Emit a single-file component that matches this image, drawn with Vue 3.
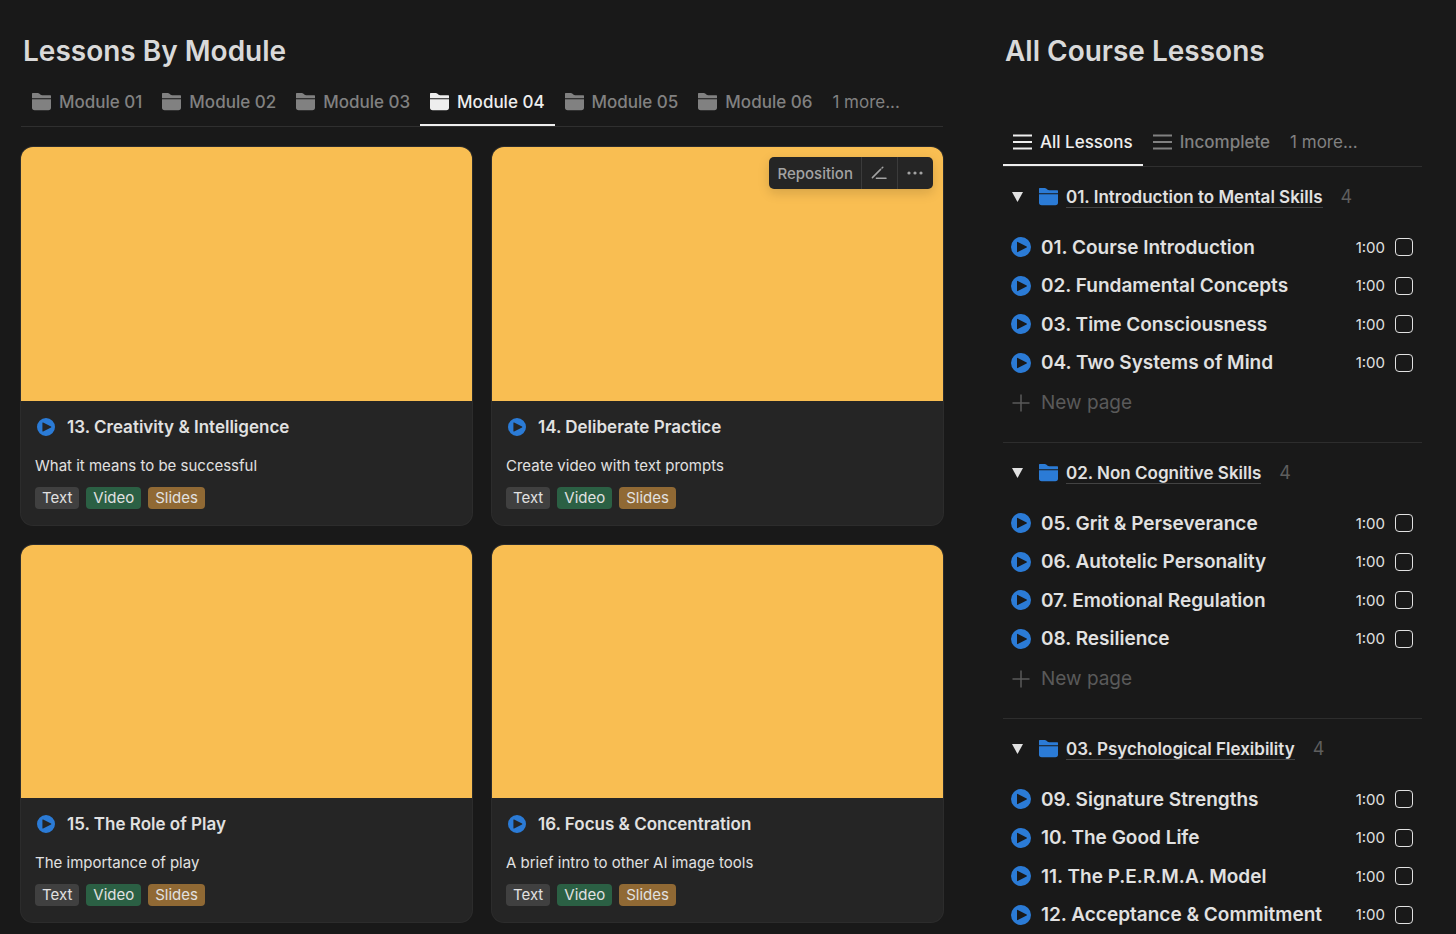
<script setup>
import { ref } from 'vue'

const modules = ['Module 01', 'Module 02', 'Module 03', 'Module 04', 'Module 05', 'Module 06']
const activeModule = ref('Module 04')

const cards = [
  { title: '13. Creativity & Intelligence', text: 'What it means to be successful' },
  { title: '14. Deliberate Practice', text: 'Create video with text prompts', tools: true },
  { title: '15. The Role of Play', text: 'The importance of play' },
  { title: '16. Focus & Concentration', text: 'A brief intro to other AI image tools' },
]
const tags = ['Text', 'Video', 'Slides']

const views = ['All Lessons', 'Incomplete']
const activeView = ref('All Lessons')

const groups = [
  {
    title: '01. Introduction to Mental Skills',
    more: true,
    lessons: ['01. Course Introduction', '02. Fundamental Concepts', '03. Time Consciousness', '04. Two Systems of Mind'],
  },
  {
    title: '02. Non Cognitive Skills',
    more: true,
    lessons: ['05. Grit & Perseverance', '06. Autotelic Personality', '07. Emotional Regulation', '08. Resilience'],
  },
  {
    title: '03. Psychological Flexibility',
    more: false,
    lessons: ['09. Signature Strengths', '10. The Good Life', '11. The P.E.R.M.A. Model', '12. Acceptance & Commitment'],
  },
]
</script>

<template>
  <main class="page">
    <section class="modules">
      <h2>Lessons By Module</h2>
      <nav class="tabs" aria-label="Modules">
        <button
          v-for="m in modules"
          :key="m"
          type="button"
          class="tab"
          :class="{ active: m === activeModule }"
          @click="activeModule = m"
        >
          <svg class="folder" viewBox="0 0 18 17" aria-hidden="true">
            <path d="M0 .6Q0 0 .6 0H5.6Q6.2 0 6.8.5L8.2 1.6Q8.8 2 9.6 2H17.4Q18 2 18 2.6V5H0Z" />
            <path d="M0 6H18V13.8Q18 16.4 15.4 16.4H2.6Q0 16.4 0 13.8Z" />
          </svg>
          <span>{{ m }}</span>
        </button>
        <button type="button" class="tab more">1 more...</button>
      </nav>

      <div class="gallery">
        <article v-for="c in cards" :key="c.title" class="card">
          <div class="cover">
            <div v-if="c.tools" class="tools">
              <button type="button">Reposition</button>
              <button type="button" class="square" aria-label="Edit">
                <svg viewBox="0 0 16 14" aria-hidden="true">
                  <path d="M1.4 11.6L9.6 3.4M11 2L11.8 1.2M5.4 12.3H15" fill="none" stroke="currentColor" stroke-width="1.5" stroke-linecap="round" />
                </svg>
              </button>
              <button type="button" class="square" aria-label="More">
                <svg viewBox="0 0 16 14" aria-hidden="true">
                  <circle cx="2" cy="7" r="1.6" /><circle cx="8" cy="7" r="1.6" /><circle cx="14" cy="7" r="1.6" />
                </svg>
              </button>
            </div>
          </div>
          <div class="body">
            <h3>
              <svg class="play" viewBox="0 0 20 20" aria-hidden="true">
                <path fill-rule="evenodd" d="M10 0A10 10 0 1 1 10 20A10 10 0 1 1 10 0ZM6 5.4V14.6Q6 15.4 6.8 15L15.6 10.5Q16.4 10 15.6 9.5L6.8 5Q6 4.6 6 5.4Z" />
              </svg>
              <span>{{ c.title }}</span>
            </h3>
            <p>{{ c.text }}</p>
            <div class="tags">
              <span v-for="t in tags" :key="t" class="tag" :class="t.toLowerCase()">{{ t }}</span>
            </div>
          </div>
        </article>
      </div>
    </section>

    <section class="course">
      <h2>All Course Lessons</h2>
      <nav class="tabs" aria-label="Lesson views">
        <button
          v-for="v in views"
          :key="v"
          type="button"
          class="tab"
          :class="{ active: v === activeView }"
          @click="activeView = v"
        >
          <svg class="lines" viewBox="0 0 19 16" aria-hidden="true">
            <path d="M0 1.5H19M0 8H19M0 14.5H19" stroke="currentColor" stroke-width="2" />
          </svg>
          <span>{{ v }}</span>
        </button>
        <button type="button" class="tab more">1 more...</button>
      </nav>

      <section v-for="g in groups" :key="g.title" class="group">
        <header>
          <button type="button" class="toggle" aria-label="Toggle group">
            <svg viewBox="0 0 11 10" aria-hidden="true"><path d="M0 0H11L5.5 10Z" /></svg>
          </button>
          <svg class="folder" viewBox="0 0 18 17" aria-hidden="true">
            <path d="M0 .6Q0 0 .6 0H5.6Q6.2 0 6.8.5L8.2 1.6Q8.8 2 9.6 2H17.4Q18 2 18 2.6V5H0Z" />
            <path d="M0 6H18V13.8Q18 16.4 15.4 16.4H2.6Q0 16.4 0 13.8Z" />
          </svg>
          <a href="#">{{ g.title }}</a>
          <span class="count">{{ g.lessons.length }}</span>
        </header>
        <ul>
          <li v-for="l in g.lessons" :key="l">
            <svg class="play" viewBox="0 0 20 20" aria-hidden="true">
              <path fill-rule="evenodd" d="M10 0A10 10 0 1 1 10 20A10 10 0 1 1 10 0ZM6 5.4V14.6Q6 15.4 6.8 15L15.6 10.5Q16.4 10 15.6 9.5L6.8 5Q6 4.6 6 5.4Z" />
            </svg>
            <a href="#">{{ l }}</a>
            <time>1:00</time>
            <input type="checkbox" :aria-label="l" />
          </li>
        </ul>
        <button v-if="g.more" type="button" class="new">
          <svg viewBox="0 0 20 20" aria-hidden="true">
            <path d="M10 1.5V18.5M1.5 10H18.5" stroke="currentColor" stroke-width="1.5" />
          </svg>
          <span>New page</span>
        </button>
      </section>
    </section>
  </main>
</template>

<style>
body {
  background: #191919;
}
</style>

<style scoped>
.page {
  display: grid;
  grid-template-columns: minmax(0, 11fr) minmax(0, 5fr);
  column-gap: 60px;
  padding: 31px 34px 0 21px;
  font-family: Inter, "Liberation Sans", sans-serif;
  color: #e1e1e1;
}
button {
  margin: 0;
  padding: 0;
  border: 0;
  background: none;
  color: inherit;
  font: inherit;
  cursor: pointer;
}
a {
  color: inherit;
  text-decoration: none;
}
svg {
  display: block;
  flex: none;
  fill: currentColor;
}
h2 {
  margin: 0;
  padding-left: 2px;
  font-size: 28px;
  line-height: 40px;
  font-weight: 600;
  color: #d9d9d9;
}

/* tab strips */
.tabs {
  display: flex;
  margin-top: 7px;
  border-bottom: 1px solid #2f2f2f;
  white-space: nowrap;
}
.modules .tabs {
  padding-left: 1px;
}
.course .tabs {
  margin-top: 47px;
}
.tab {
  display: flex;
  align-items: center;
  gap: 8px;
  padding: 0 10px;
  font-size: 17px;
  line-height: 48px;
  font-weight: 500;
  color: #818181;
}
.tab.active {
  color: #eeeeee;
  box-shadow: inset 0 -2px #eeeeee;
}
.tab.more {
  font-weight: 400;
}
.folder {
  width: 19px;
  height: 18px;
}
.lines {
  width: 19px;
  height: 16px;
}

/* gallery */
.gallery {
  display: grid;
  grid-template-columns: repeat(2, minmax(0, 1fr));
  gap: 20px;
  margin-top: 20px;
}
.card {
  overflow: hidden;
  border-radius: 12px;
  background: #252525;
  box-shadow: 0 0 0 1px #2c2c2c;
}
.cover {
  position: relative;
  aspect-ratio: 16 / 9;
  background: #f9be52;
}
.tools {
  position: absolute;
  top: 10px;
  right: 10px;
  display: flex;
  border-radius: 5px;
  background: #252525;
  box-shadow: 0 4px 12px rgba(15, 15, 15, 0.15);
  color: #a3a3a3;
}
.tools button {
  display: flex;
  align-items: center;
  justify-content: center;
  height: 32px;
  padding: 0 8px;
  font-size: 15px;
  font-weight: 500;
}
.tools .square {
  width: 36px;
  border-left: 1px solid #3b3b3b;
}
.tools svg {
  width: 16px;
  height: 14px;
}
.body {
  padding: 14px 14px 16px;
}
h3 {
  display: flex;
  align-items: center;
  gap: 12px;
  margin: 0;
  padding-left: 2px;
  font-size: 17px;
  line-height: 24px;
  font-weight: 600;
}
.play {
  width: 18px;
  height: 18px;
  color: #2b7bd6;
}
p {
  margin: 15px 0 9px;
  font-size: 15px;
  line-height: 24px;
}
.tags {
  display: flex;
  gap: 7px;
}
.tag {
  padding: 0 7px;
  border-radius: 4px;
  font-size: 15px;
  line-height: 22px;
}
.text {
  background: #404040;
}
.video {
  background: #2b6044;
}
.slides {
  background: #906934;
}

/* lesson list */
.group + .group {
  margin-top: 19px;
  border-top: 1px solid #2d2d2d;
}
header {
  display: flex;
  align-items: center;
  padding: 16px 9px 17px;
  font-size: 17px;
  line-height: 28px;
  font-weight: 600;
}
.toggle svg {
  width: 11px;
  height: 10px;
}
header .folder {
  margin: 0 8px 0 16px;
  color: #2b7bd6;
}
header a {
  line-height: 20px;
  box-shadow: 0 1px #434343;
}
.count {
  margin-left: 18px;
  font-size: 18px;
  font-weight: 400;
  color: #5e5e5e;
}
ul {
  display: grid;
  grid-auto-rows: 1fr;
  min-height: 154px;
  margin: 0;
  padding: 0;
  list-style: none;
}
li {
  display: flex;
  align-items: center;
  gap: 10px;
  padding: 0 9px 0 8px;
  font-size: 19px;
  font-weight: 600;
  white-space: nowrap;
}
li .play {
  width: 20px;
  height: 20px;
}
time {
  margin-left: auto;
  font-size: 15px;
  font-weight: 400;
}
input {
  appearance: none;
  flex: none;
  box-sizing: border-box;
  width: 18px;
  height: 18px;
  margin: 0;
  border: 1px solid #e1e1e1;
  border-radius: 4px;
}
.new {
  display: flex;
  align-items: center;
  gap: 10px;
  width: 100%;
  padding: 0 8px;
  font-size: 19px;
  line-height: 41px;
  color: #5a5a5a;
}
.new svg {
  width: 20px;
  height: 20px;
}
</style>
